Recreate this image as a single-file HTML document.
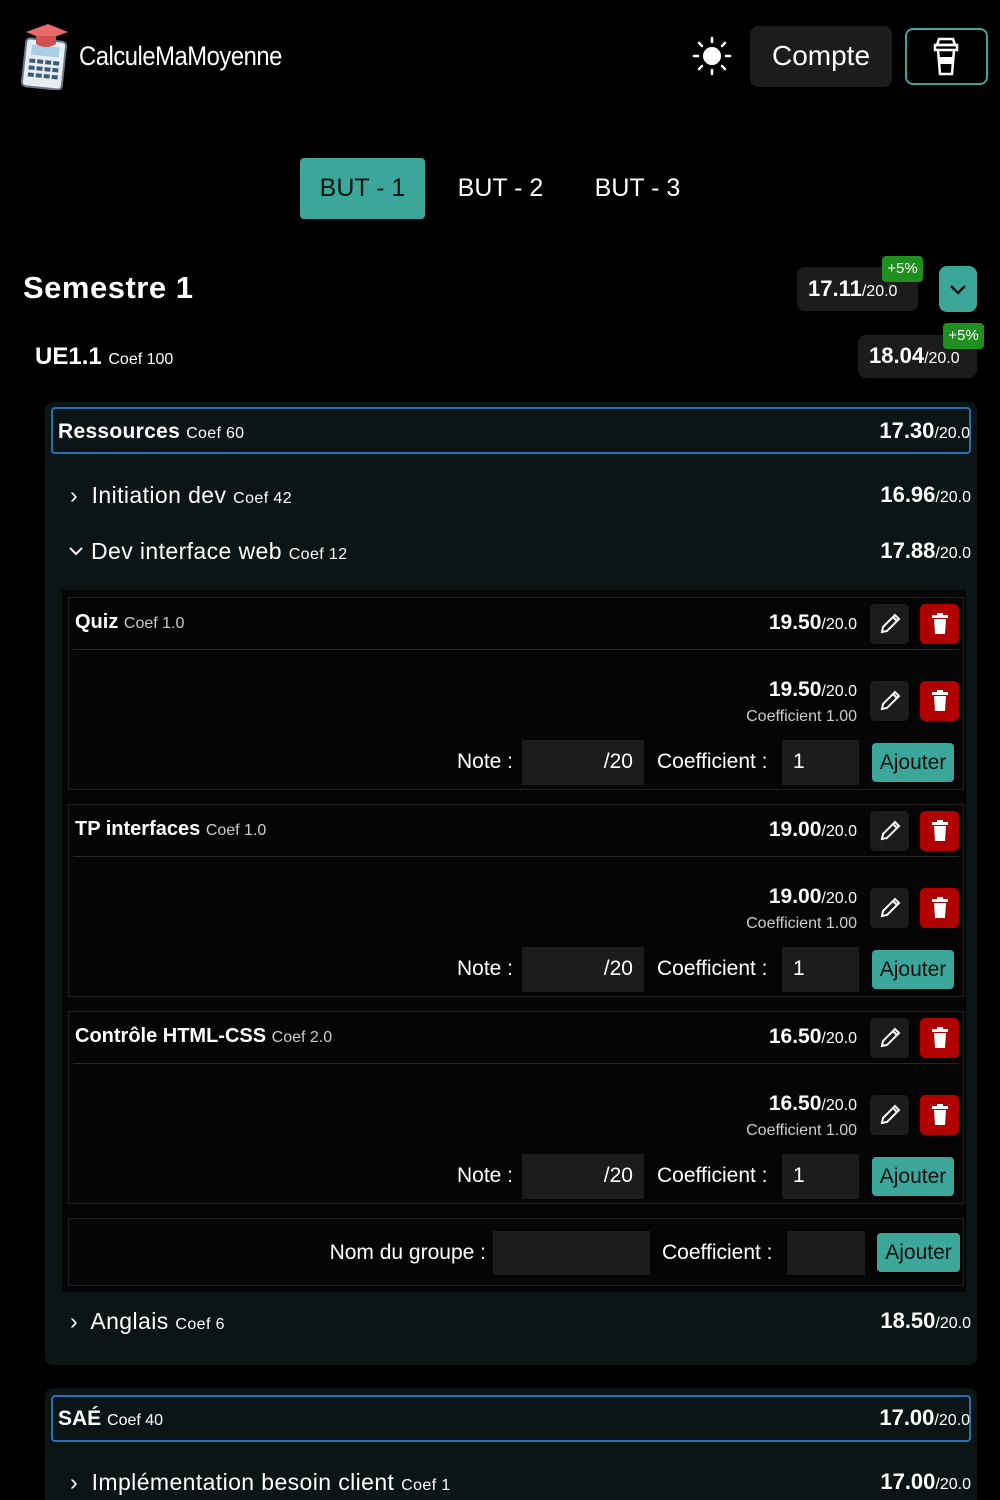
<!DOCTYPE html>
<html><head><meta charset="utf-8"><style>
*{margin:0;padding:0;box-sizing:border-box}
html,body{width:1000px;height:1500px;overflow:hidden}
body{background:#000;color:#fff;font-family:"Liberation Sans",sans-serif;position:relative}
.a{position:absolute}
.t{position:absolute;white-space:nowrap;line-height:1}
.b{font-weight:bold}
.s{font-size:16px;font-weight:normal}
.box{position:absolute;border-radius:8px}
.grey{background:#1c1c1c}
.teal{background:#3aa79a}
.red{background:#b00000}
.green{background:#1f8f1f;border-radius:4px;font-size:15px;color:#fff;text-align:center;line-height:26px}
.card{position:absolute;left:68px;width:896px;height:193px;background:#050505;border:1px solid #222}
.sep{position:absolute;left:4px;right:4px;top:51px;height:1px;background:#262626}
.ic{position:absolute;width:39px;height:40px;border-radius:5px;display:flex;align-items:center;justify-content:center}
.inp{position:absolute;background:#1c1c1c}
.btn{position:absolute;background:#3aa79a;border-radius:4px;color:#111;font-size:21px;text-align:center;line-height:39px}
.sc{font-weight:bold}
.sc span{font-weight:normal;font-size:16px}
.h{font-size:23px;letter-spacing:0.4px}
</style></head><body>

<!-- header -->
<svg class="a" style="left:18px;top:22px" width="54" height="68" viewBox="0 0 54 68">
<rect x="6" y="18" width="40" height="48" rx="4" fill="#e8edf2" stroke="#6a7a8a" stroke-width="2" transform="rotate(6 26 42)"/>
<rect x="12" y="24" width="28" height="10" fill="#a8cfe6" transform="rotate(6 26 42)"/>
<g fill="#3c5a78" transform="rotate(6 26 42)">
<rect x="11" y="38" width="6" height="4"/><rect x="19" y="38" width="6" height="4"/><rect x="27" y="38" width="6" height="4"/><rect x="35" y="38" width="6" height="4"/>
<rect x="11" y="45" width="6" height="4"/><rect x="19" y="45" width="6" height="4"/><rect x="27" y="45" width="6" height="4"/><rect x="35" y="45" width="6" height="4"/>
<rect x="11" y="52" width="6" height="4"/><rect x="19" y="52" width="6" height="4"/><rect x="27" y="52" width="6" height="4"/><rect x="35" y="52" width="6" height="4"/></g>
<polygon points="8,10 30,2 50,10 28,18" fill="#e86a6a"/>
<path d="M18 14 v8 q10 6 20 0 v-8" fill="#d05050"/>
</svg>
<div class="t" style="left:79px;top:43px;font-size:27px;letter-spacing:-0.5px;transform:scaleX(0.88);transform-origin:left">CalculeMaMoyenne</div>

<svg class="a" style="left:692px;top:36px" width="40" height="40" viewBox="0 0 40 40">
<circle cx="20" cy="20" r="9" fill="#fff"/>
<g stroke="#fff" stroke-width="2.5" stroke-linecap="round">
<line x1="20" y1="2" x2="20" y2="6"/><line x1="20" y1="34" x2="20" y2="38"/><line x1="2" y1="20" x2="6" y2="20"/><line x1="34" y1="20" x2="38" y2="20"/>
<line x1="7" y1="7" x2="10" y2="10"/><line x1="30" y1="30" x2="33" y2="33"/><line x1="7" y1="33" x2="10" y2="30"/><line x1="30" y1="10" x2="33" y2="7"/></g></svg>
<div class="box grey" style="left:750px;top:26px;width:142px;height:61px"></div>
<div class="t" style="left:750px;width:142px;text-align:center;top:42px;font-size:28px">Compte</div>
<div class="box" style="left:905px;top:28px;width:83px;height:57px;border:2px solid #3aa79a"></div>
<svg class="a" style="left:932px;top:37px" width="28" height="40" viewBox="0 0 28 40">
<path d="M7 2h14l2 6H5z" fill="none" stroke="#fff" stroke-width="2.5"/>
<rect x="3" y="8" width="22" height="5" fill="none" stroke="#fff" stroke-width="2.5"/>
<path d="M6 13l2 24h12l2-24" fill="none" stroke="#fff" stroke-width="2.5"/>
<rect x="7" y="20" width="14" height="7" fill="#fff"/></svg>

<!-- tabs -->
<div class="box teal" style="left:300px;top:158px;width:125px;height:61px;border-radius:4px"></div>
<div class="t" style="left:300px;width:125px;text-align:center;top:176px;font-size:25px;color:#111">BUT - 1</div>
<div class="t" style="left:438px;width:125px;text-align:center;top:176px;font-size:25px">BUT - 2</div>
<div class="t" style="left:575px;width:125px;text-align:center;top:176px;font-size:25px">BUT - 3</div>

<!-- semestre -->
<div class="t b" style="left:23px;top:272px;font-size:31px;letter-spacing:0.5px">Semestre 1</div>
<div class="box grey" style="left:797px;top:267px;width:121px;height:44px"></div>
<div class="t sc" style="left:808px;top:278px;font-size:22px">17.11<span>/20.0</span></div>
<div class="a green" style="left:882px;top:256px;width:41px;height:26px">+5%</div>
<div class="box teal" style="left:939px;top:266px;width:38px;height:46px"></div>
<svg class="a" style="left:948px;top:281px" width="20" height="16" viewBox="0 0 20 16"><path d="M3 5l7 7 7-7" fill="none" stroke="#111" stroke-width="2.5"/></svg>

<div class="t b" style="left:35px;top:345px;font-size:24px">UE1.1 <span class="s">Coef 100</span></div>
<div class="box grey" style="left:858px;top:335px;width:119px;height:43px"></div>
<div class="t sc" style="left:869px;top:345px;font-size:22px">18.04<span>/20.0</span></div>
<div class="a green" style="left:943px;top:323px;width:41px;height:26px">+5%</div>

<!-- ressources group -->
<div class="box" style="left:45px;top:402px;width:932px;height:963px;background:#0c1515"></div>
<div class="box" style="left:51px;top:407px;width:920px;height:47px;border:2px solid #2a6fb0;border-radius:4px"></div>
<div class="t b" style="left:58px;top:421px;font-size:21px;letter-spacing:0.3px">Ressources <span class="s b">Coef 60</span></div>
<div class="t sc" style="right:30px;top:420px;font-size:22px">17.30<span>/20.0</span></div>

<div class="t h" style="left:70px;top:484px">›&nbsp; Initiation dev <span class="s b">Coef 42</span></div>
<div class="t sc" style="right:29px;top:484px;font-size:22px">16.96<span>/20.0</span></div>
<svg class="a" style="left:68px;top:544px" width="16" height="14" viewBox="0 0 16 14"><path d="M2 4l6 6 6-6" fill="none" stroke="#fff" stroke-width="2"/></svg>
<div class="t h" style="left:91px;top:540px">Dev interface web <span class="s b">Coef 12</span></div>
<div class="t sc" style="right:29px;top:540px;font-size:22px">17.88<span>/20.0</span></div>

<div class="a" style="left:62px;top:590px;width:904px;height:702px;background:#050505"></div>

<div class="card" style="top:597px">
 <div class="t" style="left:6px;top:14px;font-size:20px"><b>Quiz</b> <span class="s" style="color:#ccc">Coef 1.0</span></div>
 <div class="t sc" style="right:106px;top:14px;font-size:21px">19.50<span>/20.0</span></div>
 <div class="ic grey" style="left:801px;top:6px"><svg width="26" height="26" viewBox="0 0 26 26"><path d="M5 21l1-5L18 4l4 4L10 20zM16 6l4 4" fill="none" stroke="#fff" stroke-width="2"/></svg></div>
 <div class="ic red" style="left:851px;top:6px"><svg width="20" height="24" viewBox="0 0 20 24"><rect x="2" y="3" width="16" height="3" fill="#fff"/><rect x="7" y="1" width="6" height="3" fill="#fff"/><path d="M4 7h12l-1 15H5z" fill="#fff"/></svg></div>
 <div class="sep"></div>
 <div class="t sc" style="right:106px;top:81px;font-size:21px">19.50<span>/20.0</span></div>
 <div class="t" style="right:106px;top:111px;font-size:16px;color:#ccc">Coefficient 1.00</div>
 <div class="ic grey" style="left:801px;top:83px"><svg width="26" height="26" viewBox="0 0 26 26"><path d="M5 21l1-5L18 4l4 4L10 20zM16 6l4 4" fill="none" stroke="#fff" stroke-width="2"/></svg></div>
 <div class="ic red" style="left:851px;top:83px"><svg width="20" height="24" viewBox="0 0 20 24"><rect x="2" y="3" width="16" height="3" fill="#fff"/><rect x="7" y="1" width="6" height="3" fill="#fff"/><path d="M4 7h12l-1 15H5z" fill="#fff"/></svg></div>
 <div class="t" style="right:450px;top:153px;font-size:21px">Note :</div>
 <div class="inp" style="left:453px;top:142px;width:122px;height:45px"></div>
 <div class="t" style="right:330px;top:153px;font-size:21px">/20</div>
 <div class="t" style="left:588px;top:153px;font-size:21px">Coefficient :</div>
 <div class="inp" style="left:713px;top:142px;width:77px;height:45px"></div>
 <div class="t" style="left:724px;top:153px;font-size:21px">1</div>
 <div class="btn" style="left:803px;top:145px;width:82px;height:39px">Ajouter</div>
</div>

<div class="card" style="top:804px">
 <div class="t" style="left:6px;top:14px;font-size:20px"><b>TP interfaces</b> <span class="s" style="color:#ccc">Coef 1.0</span></div>
 <div class="t sc" style="right:106px;top:14px;font-size:21px">19.00<span>/20.0</span></div>
 <div class="ic grey" style="left:801px;top:6px"><svg width="26" height="26" viewBox="0 0 26 26"><path d="M5 21l1-5L18 4l4 4L10 20zM16 6l4 4" fill="none" stroke="#fff" stroke-width="2"/></svg></div>
 <div class="ic red" style="left:851px;top:6px"><svg width="20" height="24" viewBox="0 0 20 24"><rect x="2" y="3" width="16" height="3" fill="#fff"/><rect x="7" y="1" width="6" height="3" fill="#fff"/><path d="M4 7h12l-1 15H5z" fill="#fff"/></svg></div>
 <div class="sep"></div>
 <div class="t sc" style="right:106px;top:81px;font-size:21px">19.00<span>/20.0</span></div>
 <div class="t" style="right:106px;top:111px;font-size:16px;color:#ccc">Coefficient 1.00</div>
 <div class="ic grey" style="left:801px;top:83px"><svg width="26" height="26" viewBox="0 0 26 26"><path d="M5 21l1-5L18 4l4 4L10 20zM16 6l4 4" fill="none" stroke="#fff" stroke-width="2"/></svg></div>
 <div class="ic red" style="left:851px;top:83px"><svg width="20" height="24" viewBox="0 0 20 24"><rect x="2" y="3" width="16" height="3" fill="#fff"/><rect x="7" y="1" width="6" height="3" fill="#fff"/><path d="M4 7h12l-1 15H5z" fill="#fff"/></svg></div>
 <div class="t" style="right:450px;top:153px;font-size:21px">Note :</div>
 <div class="inp" style="left:453px;top:142px;width:122px;height:45px"></div>
 <div class="t" style="right:330px;top:153px;font-size:21px">/20</div>
 <div class="t" style="left:588px;top:153px;font-size:21px">Coefficient :</div>
 <div class="inp" style="left:713px;top:142px;width:77px;height:45px"></div>
 <div class="t" style="left:724px;top:153px;font-size:21px">1</div>
 <div class="btn" style="left:803px;top:145px;width:82px;height:39px">Ajouter</div>
</div>

<div class="card" style="top:1011px">
 <div class="t" style="left:6px;top:14px;font-size:20px"><b>Contrôle HTML-CSS</b> <span class="s" style="color:#ccc">Coef 2.0</span></div>
 <div class="t sc" style="right:106px;top:14px;font-size:21px">16.50<span>/20.0</span></div>
 <div class="ic grey" style="left:801px;top:6px"><svg width="26" height="26" viewBox="0 0 26 26"><path d="M5 21l1-5L18 4l4 4L10 20zM16 6l4 4" fill="none" stroke="#fff" stroke-width="2"/></svg></div>
 <div class="ic red" style="left:851px;top:6px"><svg width="20" height="24" viewBox="0 0 20 24"><rect x="2" y="3" width="16" height="3" fill="#fff"/><rect x="7" y="1" width="6" height="3" fill="#fff"/><path d="M4 7h12l-1 15H5z" fill="#fff"/></svg></div>
 <div class="sep"></div>
 <div class="t sc" style="right:106px;top:81px;font-size:21px">16.50<span>/20.0</span></div>
 <div class="t" style="right:106px;top:111px;font-size:16px;color:#ccc">Coefficient 1.00</div>
 <div class="ic grey" style="left:801px;top:83px"><svg width="26" height="26" viewBox="0 0 26 26"><path d="M5 21l1-5L18 4l4 4L10 20zM16 6l4 4" fill="none" stroke="#fff" stroke-width="2"/></svg></div>
 <div class="ic red" style="left:851px;top:83px"><svg width="20" height="24" viewBox="0 0 20 24"><rect x="2" y="3" width="16" height="3" fill="#fff"/><rect x="7" y="1" width="6" height="3" fill="#fff"/><path d="M4 7h12l-1 15H5z" fill="#fff"/></svg></div>
 <div class="t" style="right:450px;top:153px;font-size:21px">Note :</div>
 <div class="inp" style="left:453px;top:142px;width:122px;height:45px"></div>
 <div class="t" style="right:330px;top:153px;font-size:21px">/20</div>
 <div class="t" style="left:588px;top:153px;font-size:21px">Coefficient :</div>
 <div class="inp" style="left:713px;top:142px;width:77px;height:45px"></div>
 <div class="t" style="left:724px;top:153px;font-size:21px">1</div>
 <div class="btn" style="left:803px;top:145px;width:82px;height:39px">Ajouter</div>
</div>

<div class="card" style="top:1218px;height:68px">
 <div class="t" style="right:477px;top:23px;font-size:21px">Nom du groupe :</div>
 <div class="inp" style="left:424px;top:12px;width:157px;height:44px"></div>
 <div class="t" style="left:593px;top:23px;font-size:21px">Coefficient :</div>
 <div class="inp" style="left:718px;top:12px;width:78px;height:44px"></div>
 <div class="btn" style="left:808px;top:14px;width:83px;height:39px">Ajouter</div>
</div>

<div class="t h" style="left:70px;top:1310px">›&nbsp; Anglais <span class="s b">Coef 6</span></div>
<div class="t sc" style="right:29px;top:1310px;font-size:22px">18.50<span>/20.0</span></div>

<!-- SAE -->
<div class="box" style="left:45px;top:1388px;width:932px;height:130px;background:#0c1515"></div>
<div class="box" style="left:51px;top:1395px;width:920px;height:47px;border:2px solid #2a6fb0;border-radius:4px"></div>
<div class="t b" style="left:58px;top:1408px;font-size:21px">SAÉ <span class="s b">Coef 40</span></div>
<div class="t sc" style="right:30px;top:1407px;font-size:22px">17.00<span>/20.0</span></div>
<div class="t h" style="left:70px;top:1471px">›&nbsp; Implémentation besoin client <span class="s b">Coef 1</span></div>
<div class="t sc" style="right:29px;top:1471px;font-size:22px">17.00<span>/20.0</span></div>

</body></html>
